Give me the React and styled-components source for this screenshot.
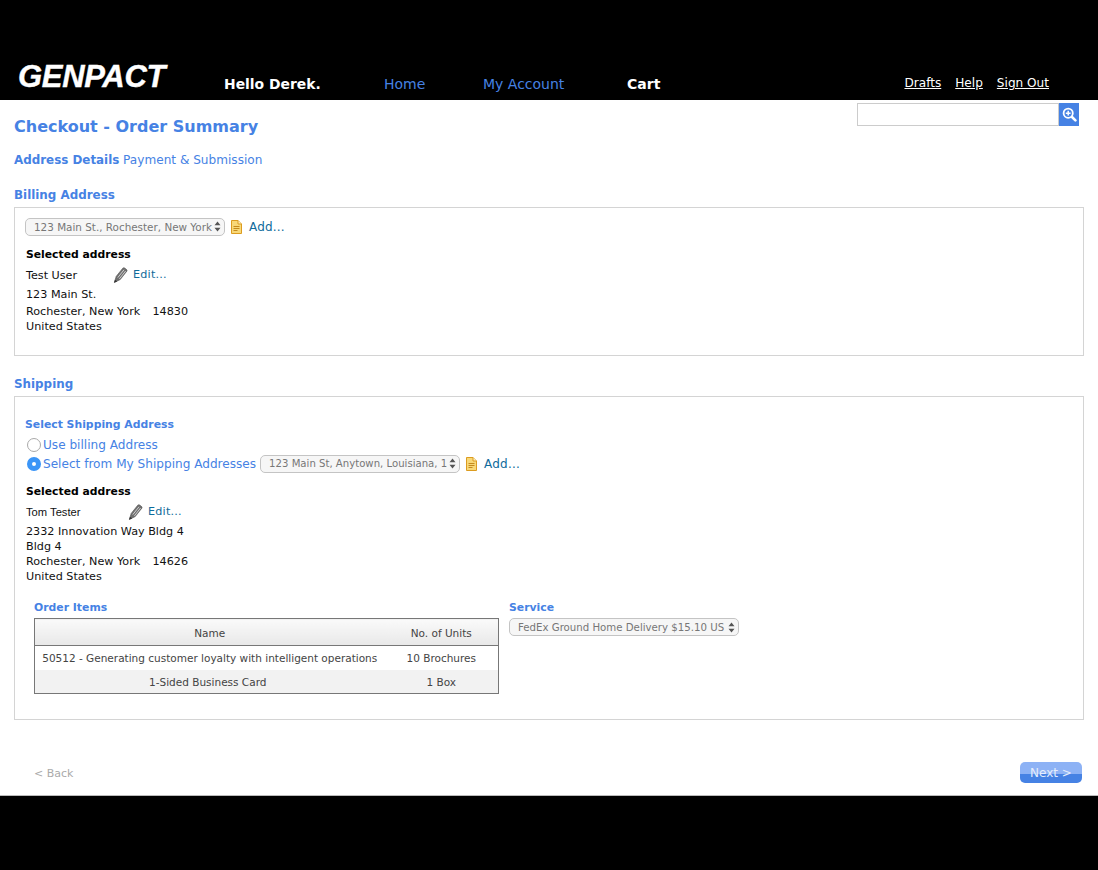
import React from 'react';
import styled, { createGlobalStyle } from 'styled-components';

const GlobalStyle = createGlobalStyle`
  html, body {
    margin: 0;
    padding: 0;
    background: #000;
    font-family: "DejaVu Sans", Verdana, sans-serif;
  }
  * { box-sizing: border-box; }
`

const Page = styled.div`
  width: 1098px;
  height: 870px;
  display: flex;
  flex-direction: column;
  background: #000;
`
const Header = styled.header`
  height: 100px;
  flex: none;
  display: flex;
  align-items: flex-start;
  padding-top: 60px;
`
const Logo = styled.div`
  width: 224px;
  padding-left: 18px;
  font-family: "Liberation Sans", Arial, sans-serif;
  font-size: 31px;
  line-height: 34px;
  font-weight: bold;
  font-style: italic;
  letter-spacing: -0.3px;
  color: #fff;
  -webkit-text-stroke: 0.4px #fff;
`
const Greeting = styled.div`
  width: 160px;
  padding-top: 15px;
  font-size: 13.9px;
  line-height: 18px;
  font-weight: bold;
  color: #fff;
`
const NavLink = styled.a`
  width: ${p => p.$width}px;
  padding-top: 15px;
  font-size: 14px;
  line-height: 18px;
  font-weight: ${p => (p.$active ? 'bold' : 'normal')};
  color: ${p => (p.$active ? '#fff' : '#4682e4')};
`
const UtilityLinks = styled.nav`
  margin-left: auto;
  margin-right: 49px;
  padding-top: 15px;
  display: flex;
  gap: 14px;
`
const UtilityLink = styled.a`
  font-size: 12.1px;
  line-height: 16px;
  color: #fff;
  text-decoration: underline;
`
const Main = styled.main`
  height: 696px;
  flex: none;
  background: #fff;
  padding: 0 14px;
  border-bottom: 1px solid #bbb;
`
const TopRow = styled.div`
  display: flex;
  justify-content: space-between;
  height: 52px;
`
const PageTitle = styled.h1`
  margin: 17px 0 0;
  font-size: 16px;
  line-height: 20px;
  font-weight: bold;
  color: #4682e4;
`
const Search = styled.div`
  display: flex;
  margin: 3px 5px 0 0;
  height: 23px;
`
const SearchInput = styled.input`
  width: 202px;
  height: 23px;
  border: 1px solid #ccc;
  background: #fff;
  padding: 0 4px;
  outline: none;
`
const SearchButton = styled.button`
  width: 20px;
  height: 23px;
  border: 0;
  padding: 0;
  background: #4682e4;
  display: flex;
  align-items: center;
  justify-content: center;
`
const Steps = styled.div`
  font-size: 11.9px;
  line-height: 16px;
  height: 33px;
  color: #4682e4;
`
const NextStep = styled.span`
  font-size: 12.1px;
`
const SectionTitle = styled.h2`
  margin: 0;
  height: 22px;
  padding-top: 2px;
  font-size: 11.9px;
  line-height: 16px;
  font-weight: bold;
  color: #4682e4;
`
const Panel = styled.section`
  border: 1px solid #d4d4d4;
  height: ${p => p.$height}px;
  margin-bottom: ${p => p.$gap || 0}px;
  padding: ${p => p.$top}px 11px 0 11px;
`
const PickerRow = styled.div`
  display: flex;
  align-items: center;
  height: 19px;
  margin-left: -1px;
`
const FakeSelect = styled.div`
  width: ${p => p.$width}px;
  height: 18px;
  flex: none;
  border: 1px solid #c4c4c4;
  border-radius: 5px;
  background: #f6f6f6;
  display: flex;
  align-items: center;
  justify-content: space-between;
  padding: 0 3px 0 8px;
  font-size: ${p => p.$size}px;
  color: #777;
  white-space: nowrap;
  overflow: hidden;
`
const SelectLabel = styled.span`
  flex: 1;
`
const Caret = styled.svg`
  flex: none;
  margin-left: 2px;
`
const AddLink = styled.a`
  margin-left: 6px;
  font-size: 12px;
  letter-spacing: 0.2px;
  color: #0f6b9b;
`
const DocIcon = styled.svg`
  margin-left: 5px;
  flex: none;
`
const SelectedHeading = styled.div`
  font-size: 10.8px;
  line-height: 14px;
  font-weight: bold;
  color: #000;
  margin-top: ${p => p.$top}px;
`
const NameRow = styled.div`
  display: flex;
  align-items: center;
  height: 18px;
  margin-top: ${p => p.$top}px;
  font-size: 11.2px;
  color: #111;
`
const PersonName = styled.span`
  width: ${p => p.$width}px;
  flex: none;
  font-family: ${p => (p.$plain ? '"Liberation Sans", Arial, sans-serif' : 'inherit')};
`
const EditLink = styled.a`
  margin: 0 0 2px 5px;
  font-size: 11.2px;
  letter-spacing: 0.2px;
  color: #0f6b9b;
`
const AddressLine = styled.div`
  font-size: 11.2px;
  line-height: 15px;
  color: #111;
  white-space: pre;
  margin-top: ${p => p.$top || 0}px;
`
const Zip = styled.span`
  margin-left: 1.5px;
`
const FieldLabel = styled.div`
  font-size: 10.85px;
  line-height: 14px;
  font-weight: bold;
  color: #4682e4;
  margin-left: ${p => p.$shift || 0}px;
`
const RadioGroup = styled.div`
  margin-top: 3px;
`
const RadioRow = styled.label`
  display: flex;
  align-items: center;
  height: 19px;
  font-size: 12.1px;
  color: #4682e4;
`
const Radio = styled.span`
  width: 14px;
  height: 14px;
  margin: 0 2px 0 1px;
  flex: none;
  border-radius: 50%;
  border: ${p => (p.$checked ? '5px solid #3b95f7' : '1px solid #a9a9a9')};
  background: #fff;
`
const RadioSelect = styled.span`
  margin-left: 4px;
  display: flex;
`
const OrderColumns = styled.div`
  display: flex;
  margin-top: 17px;
  padding-left: 8px;
`
const OrderColumn = styled.div`
  width: ${p => p.$width}px;
  flex: none;
`
const ServiceSelect = styled.div`
  margin-top: 3px;
`
const OrderTable = styled.table`
  width: 465px;
  margin-top: 3px;
  border: 1px solid #777;
  border-collapse: collapse;
  font-size: 10.5px;
  color: #444;
  table-layout: fixed;
`
const HeadCell = styled.th`
  height: 27px;
  padding: 1px 0 0;
  font-weight: normal;
  width: ${p => p.$width}px;
  border-bottom: 1px solid #777;
  background: linear-gradient(#fafafa, #e8e8e8);
`
const Row = styled.tr`
  background: ${p => (p.$alt ? '#f2f2f2' : '#fff')};
`
const Cell = styled.td`
  height: 24px;
  padding: ${p => (p.$low ? 2 : 0)}px ${p => p.$inset || 0}px 0 0;
  text-align: center;
  white-space: nowrap;
`
const Footer = styled.div`
  display: flex;
  justify-content: space-between;
  align-items: center;
  margin-top: 42px;
  padding: 0 2px 0 20px;
`
const BackLink = styled.a`
  padding-top: 1px;
  font-size: 11px;
  color: #aaa;
`
const NextButton = styled.button`
  width: 62px;
  height: 21px;
  border: 0;
  border-radius: 5px;
  padding: 0;
  font-family: inherit;
  font-size: 12px;
  color: #e4edfc;
  background: linear-gradient(#8db2f5 0, #8db2f5 55%, #4682e4 55%, #4682e4 100%);
`

const UpDown = () => (
  <Caret width="7" height="11" viewBox="0 0 7 11">
    <path d="M3.5 0.5 L6.5 4.2 H0.5 Z M3.5 10.5 L0.5 6.8 H6.5 Z" fill="#555" />
  </Caret>
)

const Doc = () => (
  <DocIcon width="13" height="14" viewBox="0 0 13 14">
    <path d="M1.5 0.5 H8 L11.5 4 V13.5 H1.5 Z" fill="#f8d878" stroke="#dc9c20" />
    <path d="M8 0.5 V4 H11.5" fill="#fdf0c0" stroke="#dc9c20" />
    <path d="M3.5 6.5 H9.5 M3.5 8.5 H9.5 M3.5 10.5 H7.5" stroke="#c48a1c" />
  </DocIcon>
)

const Pencil = () => (
  <svg width="15" height="16" viewBox="0 0 15 16">
    <path d="M3.2 9.4 L9.8 1.2 Q10.6 0.4 11.6 1 L13.6 2.6 Q14.4 3.4 13.8 4.2 L7.2 12.6 L1.4 15.4 Z" fill="#707070" stroke="#4a4a4a" strokeWidth="0.6" />
    <path d="M4.8 10.6 L11 2.8 M6.4 11.8 L12.6 4" stroke="#d8d8d8" strokeWidth="0.9" />
    <path d="M1 15.8 L2 12.8 L4.2 14.4 Z" fill="#333" />
  </svg>
)

const SearchGlass = () => (
  <svg width="15" height="15" viewBox="0 0 15 15">
    <path d="M9.5 9.5 L13.4 13.4" stroke="#fff" strokeWidth="2.6" strokeLinecap="round" />
    <circle cx="6.2" cy="6.2" r="4.6" fill="#4682e4" stroke="#fff" strokeWidth="1.8" />
    <path d="M3.8 6.2 H8.6 M6.2 3.8 V8.6" stroke="#fff" strokeWidth="1.5" />
  </svg>
)

const App = () => (
  <Page>
    <GlobalStyle />
    <Header>
      <Logo>GENPACT</Logo>
      <Greeting>Hello Derek.</Greeting>
      <NavLink $width={99}>Home</NavLink>
      <NavLink $width={144}>My Account</NavLink>
      <NavLink $width={80} $active>Cart</NavLink>
      <UtilityLinks>
        <UtilityLink>Drafts</UtilityLink>
        <UtilityLink>Help</UtilityLink>
        <UtilityLink>Sign Out</UtilityLink>
      </UtilityLinks>
    </Header>
    <Main>
      <TopRow>
        <PageTitle>Checkout - Order Summary</PageTitle>
        <Search>
          <SearchInput />
          <SearchButton><SearchGlass /></SearchButton>
        </Search>
      </TopRow>
      <Steps><b>Address Details</b> <NextStep>Payment &amp; Submission</NextStep></Steps>
      <SectionTitle>Billing Address</SectionTitle>
      <Panel $height={149} $gap={18} $top={9}>
        <PickerRow>
          <FakeSelect $width={200} $size={10.4}>
            <SelectLabel>123 Main St., Rochester, New York</SelectLabel>
            <UpDown />
          </FakeSelect>
          <Doc />
          <AddLink>Add...</AddLink>
        </PickerRow>
        <SelectedHeading $top={12}>Selected address</SelectedHeading>
        <NameRow $top={4}>
          <PersonName $width={87}>Test User</PersonName>
          <Pencil />
          <EditLink>Edit...</EditLink>
        </NameRow>
        <AddressLine $top={3}>123 Main St.</AddressLine>
        <AddressLine $top={2}>Rochester, New York   <Zip>14830</Zip></AddressLine>
        <AddressLine>United States</AddressLine>
      </Panel>
      <SectionTitle>Shipping</SectionTitle>
      <Panel $height={324} $top={21}>
        <FieldLabel $shift={-1}>Select Shipping Address</FieldLabel>
        <RadioGroup>
          <RadioRow>
            <Radio />
            Use billing Address
          </RadioRow>
          <RadioRow>
            <Radio $checked />
            Select from My Shipping Addresses
            <RadioSelect>
              <FakeSelect $width={200} $size={10.15}>
                <SelectLabel>123 Main St, Anytown, Louisiana, 1</SelectLabel>
                <UpDown />
              </FakeSelect>
            </RadioSelect>
            <Doc />
            <AddLink>Add...</AddLink>
          </RadioRow>
        </RadioGroup>
        <SelectedHeading $top={12}>Selected address</SelectedHeading>
        <NameRow $top={4}>
          <PersonName $width={102} $plain>Tom Tester</PersonName>
          <Pencil />
          <EditLink>Edit...</EditLink>
        </NameRow>
        <AddressLine $top={3}>2332 Innovation Way Bldg 4</AddressLine>
        <AddressLine>Bldg 4</AddressLine>
        <AddressLine>Rochester, New York   <Zip>14626</Zip></AddressLine>
        <AddressLine>United States</AddressLine>
        <OrderColumns>
          <OrderColumn $width={475}>
            <FieldLabel>Order Items</FieldLabel>
            <OrderTable>
              <thead>
                <tr>
                  <HeadCell $width={350}>Name</HeadCell>
                  <HeadCell>No. of Units</HeadCell>
                </tr>
              </thead>
              <tbody>
                <Row>
                  <Cell>50512 - Generating customer loyalty with intelligent operations</Cell>
                  <Cell>10 Brochures</Cell>
                </Row>
                <Row $alt>
                  <Cell $low $inset={4}>1-Sided Business Card</Cell>
                  <Cell $low>1 Box</Cell>
                </Row>
              </tbody>
            </OrderTable>
          </OrderColumn>
          <OrderColumn $width={240}>
            <FieldLabel>Service</FieldLabel>
            <ServiceSelect>
              <FakeSelect $width={230} $size={10.2}>
                <SelectLabel>FedEx Ground Home Delivery $15.10 US</SelectLabel>
                <UpDown />
              </FakeSelect>
            </ServiceSelect>
          </OrderColumn>
        </OrderColumns>
      </Panel>
      <Footer>
        <BackLink>&lt; Back</BackLink>
        <NextButton>Next &gt;</NextButton>
      </Footer>
    </Main>
  </Page>
)

export default App;
